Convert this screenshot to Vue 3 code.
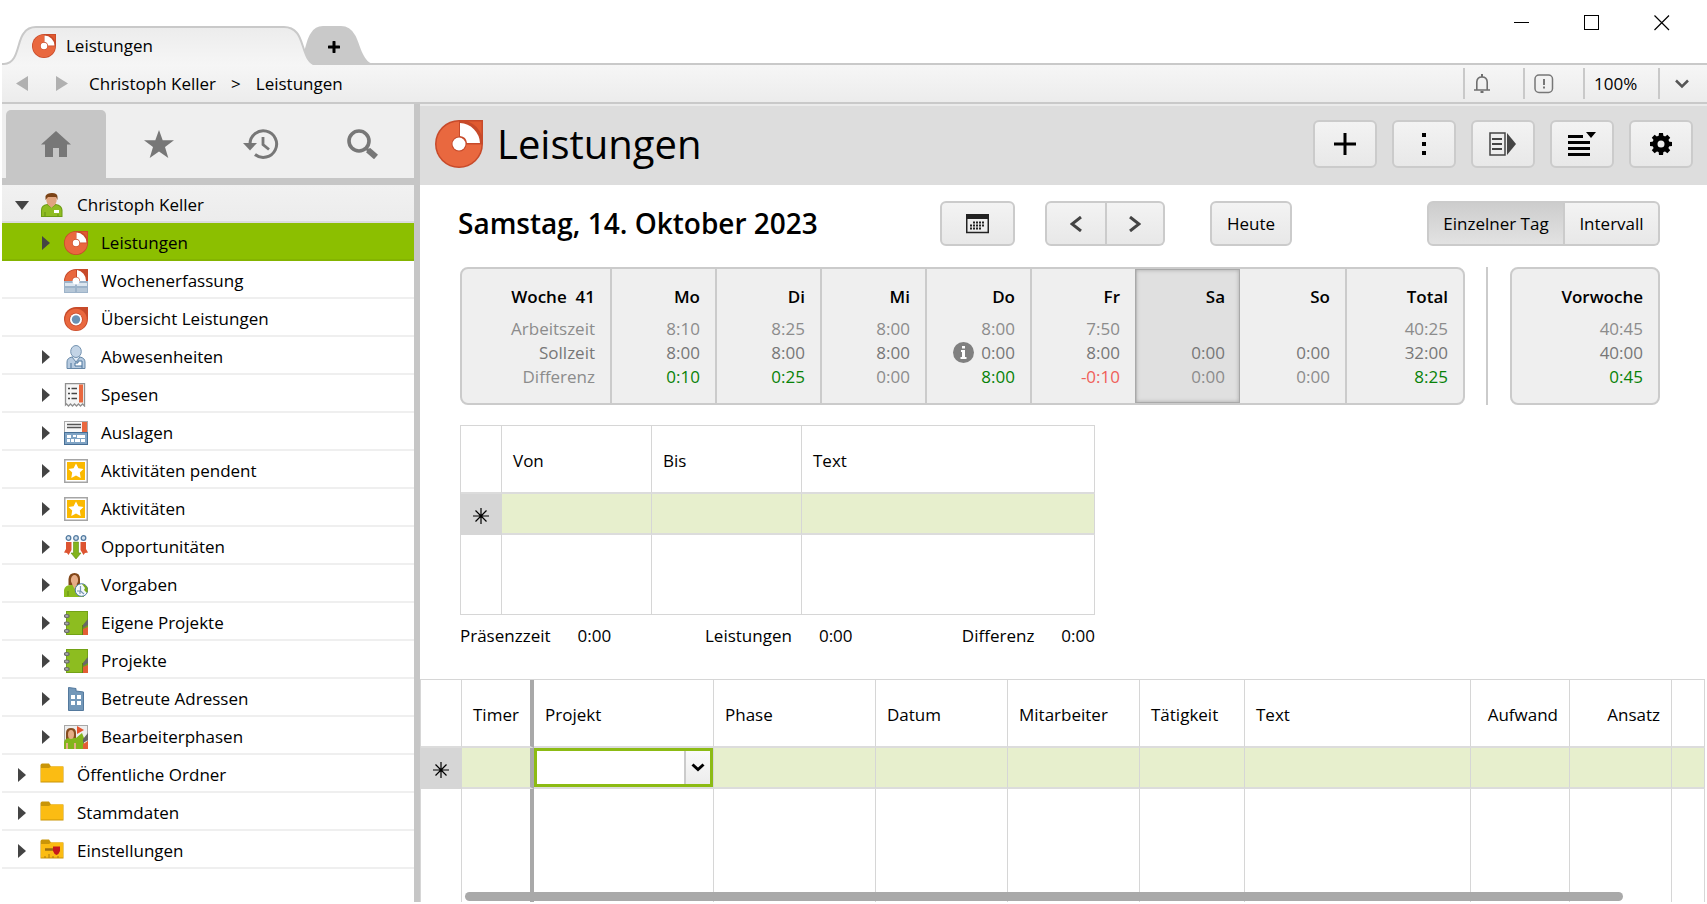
<template>
  <div class="window">
    <svg class="sprite" aria-hidden="true">
      <symbol id="disc" viewBox="0 0 48 48">
        <path d="M24 0H48V24A24 24 0 1 1 24 0Z" fill="#c74a2a" />
        <path d="M24 1.5V16.6A7.5 7.5 0 1 0 31.5 24.5H46.5A22.5 22.5 0 1 1 24 1.5Z" fill="#e9683f" />
        <path d="M33 1.5H46.5V15A24 24 0 0 0 33 1.5Z" fill="#e05a30" />
        <path d="M25 3A21 21 0 0 1 45 23H32A8 8 0 0 0 25 16Z" fill="#fff" />
        <circle cx="24" cy="24" r="6.5" fill="#fff" />
      </symbol>
      <symbol id="user" viewBox="0 0 24 24">
        <path d="M1 24V17Q1 12 7 11H16Q22 12 22.5 17V24Z" fill="#6d9c14" />
        <path d="M2 23V17Q2 13 7 12L11.5 15L16 12Q21 13 21.5 17V23Z" fill="#8fbc21" />
        <path d="M7 10L11.5 15L16 10Z" fill="#e2a681" />
        <ellipse cx="11.5" cy="7" rx="5.2" ry="6.5" fill="#e0a47e" />
        <path d="M5.500 7V3Q7 0 12 0Q17.5 0 17.5 4V7L16 4H8Z" fill="#7b4316" />
        <rect x="14" y="17" width="5" height="3" fill="#fff" />
        <path d="M5 19V23M18 21V23" stroke="#648f14" />
      </symbol>
      <symbol id="week" viewBox="0 0 24 24">
        <path d="M12 0H24V12H0A12 12 0 0 1 12 0Z" fill="#c74a2a" />
        <path d="M12 1V8A4 4 0 0 0 8 12H1A11 11 0 0 1 12 1Z" fill="#e9683f" />
        <path d="M13 1A11 11 0 0 1 22 12H16A4 4 0 0 0 13 8Z" fill="#fff" />
        <path d="M0 12H9A3 3 0 0 0 15 12H24V24H0Z" fill="#9db3c9" />
        <path d="M1 14H11V17H1ZM13 14H23V17H13Z" fill="#dce6ef" />
        <path d="M1 19H11V23H1ZM13 19H23V23H13Z" fill="#b6c7d7" />
        <circle cx="12" cy="12" r="3.5" fill="#fff" />
      </symbol>
      <symbol id="overview" viewBox="0 0 24 24">
        <path d="M12 0H24V12A12 12 0 1 1 12 0Z" fill="#c74a2a" />
        <circle cx="12" cy="12.5" r="10.8" fill="#e9683f" />
        <circle cx="12" cy="12.5" r="6.7" fill="#c74a2a" />
        <circle cx="12" cy="12.5" r="6" fill="#fff" />
        <circle cx="12" cy="12.5" r="4.2" fill="#6a92b5" />
      </symbol>
      <symbol id="absent" viewBox="0 0 24 24">
        <path d="M3 23.5V17Q3 13 8 12H16Q21 13 21 17V23.5Z" fill="#b7cbe0" stroke="#6788a8" />
        <path d="M8 12L12 17L16 12" fill="#e5eef7" stroke="#6788a8" />
        <ellipse cx="12" cy="6.5" rx="5.3" ry="6" fill="#c3d4e6" stroke="#7593b0" />
        <path d="M11 18H14V16H18V21H11Z" fill="#fff" stroke="#4b759c" />
        <path d="M7 18V23M18 21V23" stroke="#4b759c" />
      </symbol>
      <symbol id="receipt" viewBox="0 0 24 24">
        <path d="M1.5 0.5H20.5V23L18.5 21L16.5 23L14.5 21L12.5 23L10.5 21L8.5 23L6.5 21L4.5 23L2.5 21L1.5 22Z" fill="#f6f6f6" stroke="#909090" stroke-width="1.3" />
        <rect x="15" y="1.5" width="4" height="18" fill="#e9683f" />
        <path d="M4 5.5H6M7.5 5.5H13M4 10.5H6M7.5 10.5H13M4 15.5H6M7.5 15.5H13" stroke="#444" stroke-width="1.5" />
      </symbol>
      <symbol id="expense" viewBox="0 0 24 24">
        <rect x="0.5" y="0.5" width="23" height="13" fill="#f8f8f8" stroke="#aaa" />
        <path d="M3 3.500H17M3 6.500H17" stroke="#555" stroke-width="1.3" />
        <rect x="18" y="1" width="5" height="10" fill="#e9683f" />
        <rect x="0.5" y="11.5" width="23" height="12" fill="#7fa3c4" stroke="#476f95" />
        <path d="M3 14H7V17H3ZM9 14H12V16H9ZM13 14H21V17H13ZM3 18H6V21H3ZM7 18H10V21H7ZM11 18H16V21H11ZM17 18H21V21H17Z" fill="#fff" />
      </symbol>
      <symbol id="activity" viewBox="0 0 24 24">
        <rect x="0.75" y="0.75" width="22.5" height="22.5" fill="#fff" stroke="#a5a5a5" stroke-width="1.5" />
        <rect x="3" y="3" width="18" height="18" fill="#fbb900" />
        <path d="M12 4.5L14.4 9.3L19.5 10L15.8 13.6L16.7 19L12 16.5L7.3 19L8.2 13.6L4.5 10L9.6 9.3Z" fill="#fff" />
      </symbol>
      <symbol id="chance" viewBox="0 0 24 24">
        <g fill="#d5e2ee" stroke="#537ba1" stroke-width="1.3">
          <circle cx="4.5" cy="3" r="2.3" /><circle cx="12" cy="3" r="2.3" /><circle cx="19.5" cy="3" r="2.3" />
        </g>
        <path d="M2 7H7.500V15L4.5 20L3 18L0 17.5L2 14Z" fill="#dd5431" />
        <path d="M22 7H16.500V15L19.5 20L21 18L24 17.5L22 14Z" fill="#dd5431" />
        <path d="M9.5 7H14.5V18H17L12 24L7 18H9.5Z" fill="#83b41c" stroke="#608b12" stroke-width="0.6" />
      </symbol>
      <symbol id="woman" viewBox="0 0 24 24">
        <path d="M4.5 12V6Q5 0 10.5 0Q16 0 16 6V13Z" fill="#824719" />
        <path d="M0 24V17Q1 12 7 12H13Q19 12 20 17V24Z" fill="#8bbb1e" />
        <ellipse cx="10.5" cy="7" rx="3.6" ry="5" fill="#e6ad87" />
        <path d="M8 11H13L10.5 16Z" fill="#e6ad87" />
        <path d="M4 18V23" stroke="#628d12" />
      </symbol>
      <symbol id="goal" viewBox="0 0 24 24">
        <use href="#woman" />
        <circle cx="17.5" cy="17" r="6.3" fill="#f4f8fb" stroke="#4d7aa3" />
        <path d="M18 11A6 6 0 0 1 23 20L20 17L21 15Z" fill="#78aa1a" />
        <path d="M16.5 13V18L20 21M13 18H16V21" fill="none" stroke="#7696b3" stroke-width="1.2" />
      </symbol>
      <symbol id="book" viewBox="0 0 24 24">
        <rect x="2" width="22" height="24" fill="#73a216" />
        <path d="M3 1H23V9L19 14V23H3Z" fill="#8dbd20" />
        <path d="M24 8L19 14V17L24 14Z" fill="#686868" />
        <path d="M24 16L19 18V24H24Z" fill="#e35e35" />
        <path d="M18.5 14V24" stroke="#5d8511" />
        <g fill="#aaa" stroke="#6b6b6b" stroke-width="1.2">
          <ellipse cx="2.7" cy="5" rx="2.4" ry="1.5" /><ellipse cx="2.7" cy="12.5" rx="2.4" ry="1.5" /><ellipse cx="2.7" cy="20" rx="2.4" ry="1.5" />
        </g>
      </symbol>
      <symbol id="building" viewBox="0 0 24 24">
        <path d="M4.5 0.5L12 1.5V4L19.5 5V23.5H4.5Z" fill="#7398b9" stroke="#54799d" />
        <path d="M7 8H11V12H7ZM13 8H17V12H13ZM7 14H11V18H7ZM13 14H17V18H13Z" fill="#fff" />
      </symbol>
      <symbol id="phase" viewBox="0 0 24 24">
        <rect x="0.5" y="0.5" width="23" height="23" fill="#eee" stroke="#a8a8a8" />
        <path d="M2 14V8Q2 3 7 3Q12 3 12 8V15Z" fill="#874d20" />
        <path d="M0 24V17Q1 13 6 13H12L18 8L20 13V24Z" fill="#82b51b" />
        <ellipse cx="7" cy="9.5" rx="3" ry="4.5" fill="#e6ad87" />
        <path d="M3 18V24M11 18V24" stroke="#e6ad87" stroke-width="2" />
        <path d="M13 1V9L20 5Z" fill="#e6532f" />
        <path d="M24 8L19 14V18L24 15Z" fill="#666" />
        <path d="M24 16L19 19V24H24Z" fill="#e35e35" />
      </symbol>
      <symbol id="folder" viewBox="0 0 24 24">
        <path d="M0.5 5V2Q1 0.5 2 0.5H9L11 3.5H23.5V19.5H0.5Z" fill="#c99508" />
        <path d="M1 5H9L11 3.5H23V18.5H1Z" fill="#fbbc13" />
      </symbol>
      <symbol id="settings" viewBox="0 0 24 24">
        <use href="#folder" />
        <path d="M5 10.5H14" stroke="#9b6c10" stroke-width="2.5" />
        <path d="M13 7.5H20V12Q19 15 16.5 16Q14 15 13 12Z" fill="#c6191c" />
        <path d="M5 19V17M9 19V15M13 19V17M18 19V17" stroke="#aa7a10" />
      </symbol>
    </svg>

    <header class="titlebar">
      <div class="tabs">
        <svg class="tab-shape" width="372" height="39" viewBox="0 0 372 39" aria-hidden="true">
          <defs>
            <linearGradient id="tabFill" x1="0" y1="0" x2="0" y2="1">
              <stop offset="0" stop-color="#ececec" />
              <stop offset="1" stop-color="#f6f6f6" />
            </linearGradient>
          </defs>
          <path d="M290 39C304 37 302 16 309 7Q313 0 321 0H339Q348 0 353 9C358 17 360 35 371 38V39Z" fill="#c9c9c9" />
          <path d="M0 40V38H2C17 38 15 14 22 7Q26 1 34 1H282Q290 1 295 7C302 15 302 38 314 40Z" fill="url(#tabFill)" />
          <path d="M0 38H2C17 38 15 14 22 7Q26 1 34 1H282Q290 1 295 7C302 15 302 38 314 38" fill="none" stroke="#c9c9c9" stroke-width="2" />
        </svg>
        <a href="#" class="tab">
          <svg width="24" height="24"><use href="#disc" /></svg>
          <span>Leistungen</span>
        </a>
        <button class="tab-add" aria-label="Neuer Tab">
          <svg width="12" height="12" viewBox="0 0 12 12"><path d="M6 1V11M1 6H11" stroke="#000" stroke-width="3" stroke-linecap="round" /></svg>
        </button>
      </div>
      <div class="window-buttons">
        <button aria-label="Minimieren"><svg width="16" height="16"><path d="M0 7.5H15" stroke="#000" /></svg></button>
        <button aria-label="Maximieren"><svg width="16" height="16"><rect x="0.5" y="0.5" width="14" height="14" fill="none" stroke="#000" /></svg></button>
        <button aria-label="Schliessen"><svg width="16" height="16"><path d="M0.5 0.5L15 15M15 0.5L0.5 15" stroke="#000" stroke-width="1.2" /></svg></button>
      </div>
    </header>

    <div class="toolbar">
      <button class="history" aria-label="Zurück"><svg width="12" height="15"><path d="M12 0V15L0 7.5Z" fill="#b0b0b0" /></svg></button>
      <button class="history" aria-label="Vorwärts"><svg width="12" height="15"><path d="M0 0V15L12 7.5Z" fill="#b0b0b0" /></svg></button>
      <nav class="crumbs">
        <a href="#">Christoph Keller</a>
        <span>&gt;</span>
        <a href="#">Leistungen</a>
      </nav>
      <div class="status">
        <button class="status-item" aria-label="Benachrichtigungen">
          <svg width="16" height="20" viewBox="0 0 16 20" fill="none" stroke="#6f6f6f" stroke-width="1.6">
            <path d="M0 16H16M2.8 16V8Q3 3 8 3Q13 3 13.2 8V16" />
            <path d="M8 0V3M6.5 18H9.5" stroke-width="2" />
          </svg>
        </button>
        <button class="status-item" aria-label="Hinweise">
          <svg width="20" height="20" viewBox="0 0 20 20" fill="none" stroke="#777">
            <rect x="1" y="1" width="17.5" height="17.5" rx="4" stroke-width="1.5" />
            <path d="M10 5V11M10 12.5V14.5" stroke-width="2" />
          </svg>
        </button>
        <button class="status-item zoom">100%</button>
        <button class="status-item more" aria-label="Zoom wählen">
          <svg width="14" height="10"><path d="M1 1.5L7 7.5L13 1.5" fill="none" stroke="#555" stroke-width="2.5" /></svg>
        </button>
      </div>
    </div>

    <div class="body">
      <aside class="sidebar">
        <div class="modes">
          <button class="mode active" aria-label="Start">
            <svg width="30" height="26" viewBox="0 0 30 26"><path d="M15 0L30 13.5H26V26H18V17H12V26H4V13.5H0Z" fill="#777" /></svg>
          </button>
          <button class="mode" aria-label="Favoriten">
            <svg width="30" height="28" viewBox="0 0 30 28"><path d="M15 0L18.7 10.3H30L21 17L24.3 28L15 21.5L5.7 28L9 17L0 10.3H11.3Z" fill="#777" /></svg>
          </button>
          <button class="mode" aria-label="Verlauf">
            <svg width="36" height="30" viewBox="0 0 36 30">
              <path d="M7 15A13.3 13.3 0 1 1 12 25.5" fill="none" stroke="#777" stroke-width="3" />
              <path d="M0 14H14L7 21.5Z" fill="#777" />
              <path d="M20 8V15.5L26 20.5" fill="none" stroke="#777" stroke-width="2.8" />
            </svg>
          </button>
          <button class="mode" aria-label="Suchen">
            <svg width="32" height="30" viewBox="0 0 32 30">
              <circle cx="12" cy="12" r="10" fill="none" stroke="#777" stroke-width="3.6" />
              <path d="M19 19L22 22" stroke="#777" stroke-width="3" />
              <path d="M21 21L29 28" stroke="#777" stroke-width="6" />
            </svg>
          </button>
        </div>
        <ul class="tree">
          <li v-for="node in nodes" :key="node.label">
            <a href="#" :class="['node', 'level-' + node.level, { root: node.open, selected: node.selected }]">
              <span class="arrow">
                <svg v-if="node.open" width="14" height="9"><path d="M0 0H14L7 9Z" fill="#444" /></svg>
                <svg v-else-if="!node.leaf" width="8" height="14"><path d="M0 0V14L8 7Z" fill="#444" /></svg>
              </span>
              <svg width="24" height="24"><use :href="'#' + node.icon" /></svg>
              <span>{{ node.label }}</span>
            </a>
          </li>
        </ul>
      </aside>

      <main class="main">
        <div class="page-head">
          <svg width="48" height="48"><use href="#disc" /></svg>
          <h1>Leistungen</h1>
          <div class="actions">
            <button class="action" aria-label="Neu"><svg width="22" height="22"><path d="M11 0V22M0 11H22" stroke="#000" stroke-width="3" /></svg></button>
            <button class="action" aria-label="Mehr"><svg width="4" height="22"><path d="M0 0H4V4H0ZM0 9H4V13H0ZM0 18H4V22H0Z" /></svg></button>
            <button class="action" aria-label="Bericht">
              <svg width="28" height="24">
                <rect x="1" y="1" width="15" height="22" fill="#eee" stroke="#444" stroke-width="1.5" />
                <path d="M3 7H13M3 12H13M3 17H13" stroke="#444" stroke-width="2" />
                <path d="M18 1V23L27 12Z" fill="#444" />
              </svg>
            </button>
            <button class="action" aria-label="Ansicht">
              <svg width="28" height="24"><path d="M0 3H15V6H0ZM0 9H22V12H0ZM0 15H22V18H0ZM0 21H22V24H0ZM18 0H28L23 6Z" /></svg>
            </button>
            <button class="action" aria-label="Einstellungen">
              <svg width="22" height="22" viewBox="-11 -11 22 22">
                <circle r="6" fill="none" stroke="#000" stroke-width="5" />
                <path v-for="n in 8" :key="n" :transform="'rotate(' + n * 45 + ')'" d="M-2.5 -7L-2 -11H2L2.5 -7Z" />
              </svg>
            </button>
          </div>
        </div>

        <div class="day-bar">
          <h2>Samstag, 14. Oktober 2023</h2>
          <button class="btn calendar" aria-label="Kalender">
            <svg width="23" height="20">
              <rect x="0.75" y="1" width="21.5" height="17.5" fill="none" stroke="#222" stroke-width="1.5" />
              <rect width="23" height="5" fill="#222" />
              <path d="M7 8.5H19M4 11.5H19M4 14.5H16" stroke="#222" stroke-width="2" stroke-dasharray="2 1" />
            </svg>
          </button>
          <div class="group">
            <button class="btn" aria-label="Vorheriger Tag"><svg width="12" height="16"><path d="M11 1L2 8L11 15" fill="none" stroke="#444" stroke-width="3" /></svg></button>
            <button class="btn" aria-label="Nächster Tag"><svg width="12" height="16"><path d="M1 1L10 8L1 15" fill="none" stroke="#444" stroke-width="3" /></svg></button>
          </div>
          <button class="btn today">Heute</button>
          <div class="group range">
            <button class="btn pressed">Einzelner Tag</button>
            <button class="btn">Intervall</button>
          </div>
        </div>

        <div class="weeks">
          <div class="card">
            <table>
              <colgroup>
                <col class="w-label">
                <col v-for="day in days" :key="day.name" class="w-day">
                <col class="w-total">
              </colgroup>
              <thead>
                <tr>
                  <th>Woche&nbsp; 41</th>
                  <th v-for="day in days" :key="day.name" :class="{ current: day.current }">{{ day.name }}</th>
                  <th>Total</th>
                </tr>
              </thead>
              <tbody>
                <tr>
                  <td>Arbeitszeit</td>
                  <td v-for="day in days" :key="day.name" :class="{ current: day.current }">{{ day.work }}</td>
                  <td>40:25</td>
                </tr>
                <tr class="target">
                  <td>Sollzeit</td>
                  <td v-for="day in days" :key="day.name" :class="{ current: day.current }">
                    <svg v-if="day.info" class="info" width="21" height="21" viewBox="0 0 21 21">
                      <circle cx="10.5" cy="10.5" r="10.5" fill="#808080" />
                      <path d="M9 4H12V6.5H9ZM8 8H12V15H13.5V17H7.5V15H9V10H8Z" fill="#fff" />
                    </svg>
                    {{ day.target }}
                  </td>
                  <td>32:00</td>
                </tr>
                <tr>
                  <td>Differenz</td>
                  <td v-for="day in days" :key="day.name" :class="[diffClass(day.diff), { current: day.current }]">{{ day.diff }}</td>
                  <td class="plus">8:25</td>
                </tr>
              </tbody>
            </table>
            <div class="current-frame"></div>
          </div>
          <div class="rule"></div>
          <div class="card last-week">
            <table>
              <thead>
                <tr><th>Vorwoche</th></tr>
              </thead>
              <tbody>
                <tr><td>40:45</td></tr>
                <tr class="target"><td>40:00</td></tr>
                <tr><td class="plus">0:45</td></tr>
              </tbody>
            </table>
          </div>
        </div>

        <table class="grid presence">
          <colgroup>
            <col class="c-mark"><col class="c-time"><col class="c-time"><col>
          </colgroup>
          <thead>
            <tr><th></th><th>Von</th><th>Bis</th><th>Text</th></tr>
          </thead>
          <tbody>
            <tr class="new">
              <td class="mark"><svg width="16" height="16" viewBox="0 0 16 16"><path d="M8 0V16M0 8H16M2.5 2.5L13.5 13.5M13.5 2.5L2.5 13.5" stroke="#000" stroke-width="1.2" /></svg></td>
              <td></td><td></td><td></td>
            </tr>
            <tr class="rest"><td></td><td></td><td></td><td></td></tr>
          </tbody>
        </table>
        <dl class="sums">
          <div><dt>Präsenzzeit</dt><dd>0:00</dd></div>
          <div><dt>Leistungen</dt><dd>0:00</dd></div>
          <div><dt>Differenz</dt><dd>0:00</dd></div>
        </dl>

        <div class="sheet">
          <table class="grid entries">
            <colgroup>
              <col class="c-mark">
              <col v-for="col in columns" :key="col.key" :class="'c-' + col.key">
              <col class="c-end">
            </colgroup>
            <thead>
              <tr>
                <th></th>
                <th v-for="col in columns" :key="col.key" :class="{ right: col.right, frozen: col.key === 'timer' }">{{ col.label }}</th>
                <th></th>
              </tr>
            </thead>
            <tbody>
              <tr class="new">
                <td class="mark"><svg width="16" height="16" viewBox="0 0 16 16"><path d="M8 0V16M0 8H16M2.5 2.5L13.5 13.5M13.5 2.5L2.5 13.5" stroke="#000" stroke-width="1.2" /></svg></td>
                <td v-for="col in columns" :key="col.key" :class="{ frozen: col.key === 'timer' }">
                  <div v-if="col.key === 'projekt'" class="picker">
                    <select v-model="project" aria-label="Projekt"><option value=""></option></select>
                    <span class="picker-arrow">
                      <svg width="14" height="9"><path d="M1.5 1.5L7 6.5L12.5 1.5" fill="none" stroke="#000" stroke-width="3" /></svg>
                    </span>
                  </div>
                </td>
                <td></td>
              </tr>
              <tr class="rest">
                <td></td>
                <td v-for="col in columns" :key="col.key" :class="{ frozen: col.key === 'timer' }"></td>
                <td></td>
              </tr>
            </tbody>
          </table>
          <div class="scrollbar"></div>
        </div>
      </main>
    </div>
  </div>
</template>

<script setup>
import { ref } from "vue";

const project = ref("")

const nodes = [
  { label: "Christoph Keller", icon: "user", level: 1, open: true },
  { label: "Leistungen", icon: "disc", level: 2, selected: true },
  { label: "Wochenerfassung", icon: "week", level: 2, leaf: true },
  { label: "Übersicht Leistungen", icon: "overview", level: 2, leaf: true },
  { label: "Abwesenheiten", icon: "absent", level: 2 },
  { label: "Spesen", icon: "receipt", level: 2 },
  { label: "Auslagen", icon: "expense", level: 2 },
  { label: "Aktivitäten pendent", icon: "activity", level: 2 },
  { label: "Aktivitäten", icon: "activity", level: 2 },
  { label: "Opportunitäten", icon: "chance", level: 2 },
  { label: "Vorgaben", icon: "goal", level: 2 },
  { label: "Eigene Projekte", icon: "book", level: 2 },
  { label: "Projekte", icon: "book", level: 2 },
  { label: "Betreute Adressen", icon: "building", level: 2 },
  { label: "Bearbeiterphasen", icon: "phase", level: 2 },
  { label: "Öffentliche Ordner", icon: "folder", level: 1 },
  { label: "Stammdaten", icon: "folder", level: 1 },
  { label: "Einstellungen", icon: "settings", level: 1 },
]

const days = [
  { name: "Mo", work: "8:10", target: "8:00", diff: "0:10" },
  { name: "Di", work: "8:25", target: "8:00", diff: "0:25" },
  { name: "Mi", work: "8:00", target: "8:00", diff: "0:00" },
  { name: "Do", work: "8:00", target: "0:00", diff: "8:00", info: true },
  { name: "Fr", work: "7:50", target: "8:00", diff: "-0:10" },
  { name: "Sa", work: "", target: "0:00", diff: "0:00", current: true },
  { name: "So", work: "", target: "0:00", diff: "0:00" },
]

const columns = [
  { key: "timer", label: "Timer" },
  { key: "projekt", label: "Projekt" },
  { key: "phase", label: "Phase" },
  { key: "datum", label: "Datum" },
  { key: "mitarbeiter", label: "Mitarbeiter" },
  { key: "taetigkeit", label: "Tätigkeit" },
  { key: "text", label: "Text" },
  { key: "aufwand", label: "Aufwand", right: true },
  { key: "ansatz", label: "Ansatz", right: true },
]

const diffClass = (diff) => {
  if (diff === "0:00") return ""
  return diff.startsWith("-") ? "minus" : "plus"
}
</script>

<style>
body {
  margin: 0;
  background: #fff;
}
</style>

<style scoped>
* {
  box-sizing: border-box;
}

.window {
  display: flex;
  flex-direction: column;
  height: 100vh;
  padding: 0 0 2px 2px;
  overflow: hidden;
  font-family: "Open Sans", "Noto Sans", sans-serif;
  font-size: 17px;
  line-height: 24px;
  color: #000;
}

.sprite {
  position: absolute;
  width: 0;
  height: 0;
}

svg {
  display: block;
  flex: none;
}

a {
  color: inherit;
  text-decoration: none;
}

button {
  display: flex;
  align-items: center;
  justify-content: center;
  padding: 0;
  border: 0;
  background: none;
  font: inherit;
  color: inherit;
}

.titlebar {
  display: flex;
  justify-content: space-between;
  flex: none;
  height: 65px;
  border-bottom: 2px solid #c9c9c9;
}

.tabs {
  position: relative;
  display: flex;
  height: 39px;
  margin-top: 26px;
}

.tab-shape {
  position: absolute;
  left: 0;
  top: 0;
}

.tab {
  position: relative;
  display: flex;
  align-items: center;
  gap: 10px;
  width: 302px;
  padding-left: 30px;
}

.tab-add {
  position: relative;
  width: 60px;
  padding-top: 3px;
}

.window-buttons {
  display: flex;
  height: 45px;
  padding-right: 10px;
}

.window-buttons button {
  width: 70px;
}

.toolbar {
  display: flex;
  align-items: center;
  flex: none;
  height: 39px;
  padding-left: 14px;
  border-bottom: 2px solid #c9c9c9;
  background: linear-gradient(#f6f6f6, #ececec);
}

.history {
  width: 12px;
  margin-right: 28px;
}

.crumbs {
  display: flex;
  gap: 15px;
  margin-left: -7px;
}

.status {
  display: flex;
  margin-left: auto;
}

.status-item {
  justify-content: flex-start;
  width: 60px;
  height: 31px;
  padding-left: 9px;
  border-left: 2px solid #c9c9c9;
}

.zoom {
  width: 75px;
}

.more {
  width: 49px;
  padding-left: 15px;
}

.body {
  display: flex;
  flex: 1;
  min-height: 0;
}

.sidebar {
  flex: none;
  width: 418px;
  border-right: 6px solid #c6c6c6;
}

.modes {
  display: grid;
  grid-template-columns: repeat(4, 1fr);
  height: 81px;
  padding: 6px 0 0 4px;
  border-bottom: 7px solid #c6c6c6;
  background: #efefef;
}

.mode.active {
  margin-right: 2px;
  border-radius: 5px 5px 0 0;
  background: #c6c6c6;
}

.tree {
  margin: 0;
  padding: 0;
  list-style: none;
}

.node {
  display: flex;
  align-items: center;
  height: 38px;
  padding: 4px 0 0 12px;
  border-bottom: 2px solid #efefef;
}

.level-2 {
  padding-left: 36px;
}

.node.root {
  border-bottom-color: #dcdcdc;
  background: linear-gradient(#f1f1f1, #ececec);
}

.node.selected {
  border-bottom-color: #84b400;
  background: #8cbf00;
}

.arrow {
  display: flex;
  justify-content: center;
  width: 16px;
  margin-right: 10px;
}

.node > svg {
  margin-right: 13px;
}

.main {
  display: flex;
  flex-direction: column;
  flex: 1;
  min-width: 0;
}

.page-head {
  display: flex;
  align-items: center;
  flex: none;
  height: 81px;
  padding: 0 14px 3px 15px;
  border-top: 2px solid #ebebeb;
  background: #ddd;
}

h1 {
  margin: 0 0 0 14px;
  font-size: 40px;
  line-height: 48px;
  font-weight: 400;
}

.actions {
  display: flex;
  gap: 15px;
  margin-left: auto;
}

.action,
.btn {
  border: 2px solid #cbcbcb;
  border-radius: 6px;
  background: linear-gradient(#f3f3f3, #e8e8e8);
}

.action {
  width: 64px;
  height: 48px;
}

.day-bar {
  display: flex;
  align-items: center;
  flex: none;
  padding: 16px 47px 0 38px;
}

h2 {
  flex: 1;
  margin: 0;
  padding-bottom: 2px;
  font-size: 28px;
  line-height: 40px;
  font-weight: 600;
}

.btn {
  height: 45px;
}

.calendar {
  width: 75px;
  margin-right: 30px;
}

.group {
  display: flex;
}

.group .btn {
  width: 62px;
}

.group .btn:first-child {
  border-radius: 6px 0 0 6px;
}

.group .btn:last-child {
  width: 58px;
  border-left: 0;
  border-radius: 0 6px 6px 0;
}

.today {
  width: 82px;
  margin: 0 135px 0 45px;
}

.range .btn:first-child {
  width: 138px;
}

.range .btn:last-child {
  width: 95px;
}

.btn.pressed {
  background: linear-gradient(#cdcdcd, #e2e2e2);
}

.weeks {
  display: flex;
  flex: none;
  margin: 21px 47px 0 40px;
}

.card {
  position: relative;
  flex: 1;
  border: 2px solid #cbcbcb;
  border-radius: 8px;
  background: #efefef;
  overflow: hidden;
}

.card table {
  width: 100%;
  table-layout: fixed;
  border-collapse: separate;
  border-spacing: 0;
}

.w-label {
  width: 150px;
}

.w-day {
  width: 105px;
}

.w-total {
  width: 116px;
}

.card th,
.card td {
  padding: 0 15px 0 0;
  border-right: 2px solid #cbcbcb;
  text-align: right;
  white-space: nowrap;
}

.card th {
  padding-top: 16px;
  padding-bottom: 8px;
  font-weight: 600;
}

.card td {
  height: 24px;
  color: #8c8c8c;
}

.card th:last-child,
.card td:last-child {
  border-right: 0;
}

.card tr:last-child td {
  height: 38px;
  padding-bottom: 14px;
}

.card .target td {
  color: #777;
}

.card .current {
  border-right-color: #efefef;
  background: #e0e0e0;
  background-clip: padding-box;
}

.card .plus {
  color: #078207;
}

.card .minus {
  color: #f0605a;
}

.info {
  display: inline-block;
  margin-right: 3px;
  vertical-align: -4px;
}

/* inner shadow around all four cells of the chosen day */
.current-frame {
  position: absolute;
  top: 0;
  bottom: 0;
  left: calc(675 / 1001 * 100% - 2px);
  width: calc(105 / 1001 * 100%);
  border: 1px solid #a9a9a9;
  box-shadow: inset 0 0 4px #a9a9a9;
}

.rule {
  width: 2px;
  margin: 0 22px 0 21px;
  background: #cbcbcb;
}

.last-week {
  flex: none;
  width: 150px;
}

.grid {
  table-layout: fixed;
  border-collapse: separate;
  border-spacing: 0;
}

.grid th,
.grid td {
  padding: 0 11px;
  border-right: 1px solid #d6d6d6;
  text-align: left;
  font-weight: 400;
}

.grid th {
  height: 68px;
  padding-top: 4px;
  border-bottom: 2px solid #dcdcdc;
}

.grid .new td {
  height: 41px;
  border-bottom: 2px solid #dcdcdc;
  background: #e7efcd;
}

.grid .new .mark {
  padding: 4px 0 0 12px;
  border-color: #d6d6d6;
  background: #d6d6d6;
}

.c-mark {
  width: 41px;
}

.c-time {
  width: 150px;
}

.presence {
  flex: none;
  width: 635px;
  margin: 20px 0 0 40px;
  border: 1px solid #d6d6d6;
  border-right: 0;
}

.presence .rest td {
  height: 79px;
}

.sums {
  display: grid;
  grid-template-columns: 245px auto auto;
  flex: none;
  width: 635px;
  margin: 9px 0 31px 40px;
}

.sums div {
  display: flex;
  gap: 27px;
}

.sums div:last-child {
  justify-content: flex-end;
}

.sums dd {
  margin: 0;
}

.sheet {
  position: relative;
  flex: 1;
  min-height: 0;
  margin-right: 2px;
  border: 1px solid #d6d6d6;
  border-width: 1px 0 0 1px;
}

.entries {
  width: 100%;
  height: 100%;
}

.grid .right {
  text-align: right;
}

.grid .frozen {
  border-right: 4px solid #a9a9a9;
}

.c-timer {
  width: 72px;
}

.c-projekt {
  width: 180px;
}

.c-phase {
  width: 162px;
}

.c-datum,
.c-mitarbeiter {
  width: 132px;
}

.c-taetigkeit {
  width: 105px;
}

.c-aufwand {
  width: 99px;
}

.c-ansatz {
  width: 102px;
}

.c-end {
  width: 33px;
}

.entries td {
  padding: 0;
}

.picker {
  position: relative;
  height: 39px;
  border: 3px solid #8cbb14;
  background: #fff;
}

.picker select {
  width: 100%;
  height: 100%;
  padding: 0 34px 0 8px;
  border: 0;
  background: none;
  appearance: none;
  font: inherit;
}

.picker-arrow {
  position: absolute;
  top: 0;
  right: 0;
  bottom: 0;
  display: flex;
  align-items: center;
  justify-content: center;
  width: 26px;
  border-left: 2px solid #cbcbcb;
  background: linear-gradient(#fafafa, #ececec);
  pointer-events: none;
}

.scrollbar {
  position: absolute;
  right: 82px;
  bottom: 1px;
  left: 44px;
  height: 9px;
  border-radius: 5px;
  background: #a9a9a9;
}
</style>
